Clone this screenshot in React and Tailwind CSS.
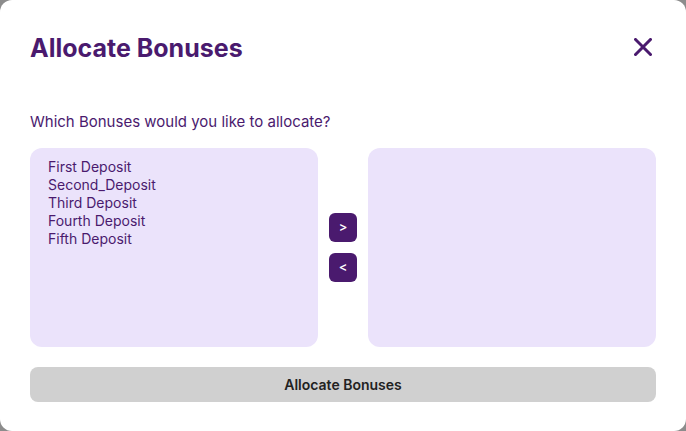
import React, { useState } from "react";

const ALL_BONUSES = [
  "First Deposit",
  "Second_Deposit",
  "Third Deposit",
  "Fourth Deposit",
  "Fifth Deposit",
];

const CloseIcon = () => (
  <svg width="18" height="18" viewBox="0 0 18 18" fill="none">
    <path d="M1.5 1.5L16.5 16.5M16.5 1.5L1.5 16.5" stroke="#4a1a6e" strokeWidth="3" strokeLinecap="square" />
  </svg>
);

const App = () => {
  const [available] = useState(ALL_BONUSES);
  const [selected] = useState([]);

  return (
    <div className="w-[686px] h-[431px] bg-[#8c8c8c] font-['Inter',sans-serif]">
      <div className="w-full h-full bg-white rounded-xl px-[30px] pt-[33px] flex flex-col">
        {/* Header */}
        <div className="flex items-center justify-between">
          <h1 className="text-[25px] leading-[30px] font-bold text-[#4a1a6e]">Allocate Bonuses</h1>
          <button className="mr-[4px] -mt-[2px]">
            <CloseIcon />
          </button>
        </div>

        <p className="mt-[50px] text-[15px] leading-[18px] text-[#4a1a6e]">
          Which Bonuses would you like to allocate?
        </p>

        {/* Lists */}
        <div className="mt-[17px] flex gap-[11px]">
          <div className="flex-1 h-[199px] rounded-xl bg-[#ebe3fb] px-[18px] py-[10px]">
            {available.map((b) => (
              <div key={b} className="text-[14px] leading-[18px] text-[#4a1a6e]">
                {b}
              </div>
            ))}
          </div>
          <div className="w-[28px] flex flex-col items-center justify-center gap-[11px]">
            <button className="w-[28px] h-[29px] rounded-md bg-[#4a1a6e] text-white text-[13px] font-medium leading-none">
              &gt;
            </button>
            <button className="w-[28px] h-[29px] rounded-md bg-[#4a1a6e] text-white text-[13px] font-medium leading-none">
              &lt;
            </button>
          </div>
          <div className="flex-1 h-[199px] rounded-xl bg-[#ebe3fb] px-[18px] py-[10px]">
            {selected.map((b) => (
              <div key={b} className="text-[14px] leading-[18px] text-[#4a1a6e]">
                {b}
              </div>
            ))}
          </div>
        </div>

        <button className="mt-[20px] w-full h-[35px] rounded-lg bg-[#d0d0d0] text-[14px] font-semibold text-[#222]">
          Allocate Bonuses
        </button>
      </div>
    </div>
  );
};

export default App;
